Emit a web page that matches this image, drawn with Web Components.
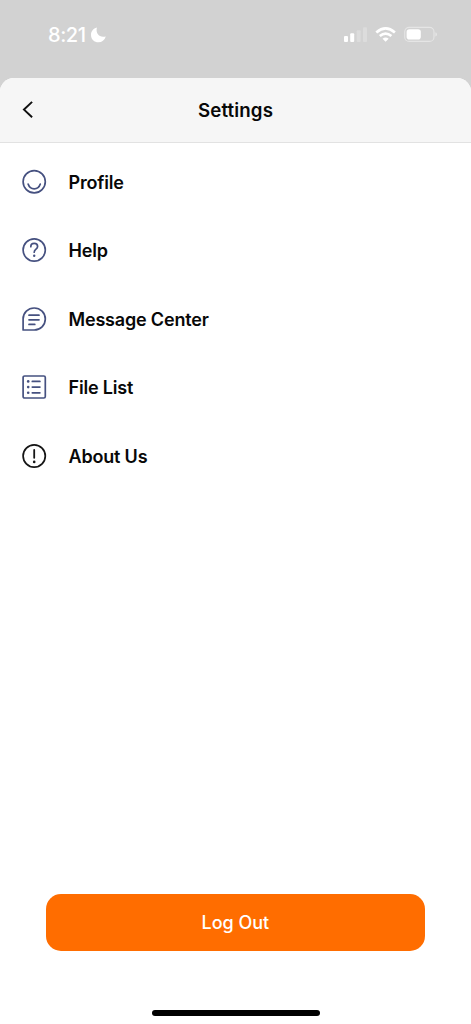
<!DOCTYPE html>
<html lang="en">
<head>
<meta charset="utf-8">
<title>Settings</title>
<style>
html,body{margin:0;height:100%;background:#d2d2d2}
body{font-family:Inter,"Liberation Sans",sans-serif;color:#080808;overflow:hidden}
</style>
</head>
<body>
<settings-screen></settings-screen>
<script>
const define = (name, html) => customElements.define(name, class extends HTMLElement {
  constructor() {
    super();
    const t = document.createElement('template');
    t.innerHTML = html;
    this.attachShadow({mode: 'open'}).append(t.content.cloneNode(true));
  }
});

define('status-bar', `
<style>
:host{display:flex;align-items:center;box-sizing:border-box;height:78px;padding:0 33px 8px 48px;color:#fff}
.time{font-size:20px;line-height:24px;font-weight:500;letter-spacing:-.45px;width:41px;white-space:nowrap}
svg{display:block;flex:none}
.moon{margin-left:1px}
.signals{margin-left:auto}
</style>
<span class="time">8:21</span>
<svg class="moon" width="18" height="18" viewBox="0 0 18 18"><path fill="#fff" d="M6.9 1.6C5.3 7.7 9.7 12.2 15.8 10.4C14.6 14.2 11.8 16.3 8.5 16.3C4.3 16.3 1 13 1 8.9C1 5.5 3.3 2.4 6.9 1.6Z"/></svg>
<svg class="signals" width="98" height="22" viewBox="340 24 98 22">
  <g fill="#fff"><rect x="344" y="36" width="4" height="6" rx="1"/><rect x="350.2" y="33.3" width="4" height="8.7" rx="1"/></g>
  <g fill="#dcdcdc"><rect x="356.7" y="30.2" width="4" height="11.8" rx="1"/><rect x="363" y="27.3" width="4" height="14.7" rx="1"/></g>
  <g fill="none" stroke="#fff" stroke-width="2.7"><path d="M376.3 32.5Q385.6 24.4 394.9 32.5"/><path d="M379.8 36Q385.6 31.2 391.4 36"/></g>
  <path fill="#fff" d="M382.5 38.7Q385.6 36.3 388.7 38.7L385.6 41.8Z"/>
  <rect x="404.7" y="27.4" width="29.3" height="14" rx="4.5" fill="none" stroke="#e5e5e5" stroke-width="1.1"/>
  <rect x="406.6" y="29.3" width="14.2" height="10.2" rx="2.8" fill="#fff"/>
  <path fill="#e5e5e5" d="M435.4 32.2Q437 32.8 437 34.4Q437 36 435.4 36.6Z"/>
</svg>`);

define('nav-header', `
<style>
:host{display:grid;grid-template-columns:48px 1fr 48px;align-items:center;box-sizing:border-box;height:64.5px;background:#f6f6f6;border-bottom:1.2px solid #e2e2e2}
svg{display:block;margin-left:20px}
h1{margin:0;padding-top:2px;text-align:center;font-size:18.7px;line-height:24px;font-weight:600;letter-spacing:.12px}
</style>
<svg width="16" height="20" viewBox="0 0 16 20"><path d="M12.1 1.9L4 9.6L12.1 17.3" fill="none" stroke="#111" stroke-width="2"/></svg>
<h1><slot></slot></h1>`);

define('menu-item', `
<style>
:host{display:flex;align-items:center;height:68.5px;padding-left:21px;gap:21.5px;font-size:18px;line-height:24px;font-weight:600;letter-spacing:-.18px;white-space:nowrap}
span{padding-top:2px}
::slotted(svg){display:block;flex:none;width:26px;height:26px;fill:none;stroke:#465180;stroke-width:1.7;stroke-linecap:round;stroke-linejoin:round}
</style>
<slot name="icon"></slot><span><slot></slot></span>`);

define('action-button', `
<style>
:host{display:block}
button{display:block;width:100%;height:57px;border:0;border-radius:15px;padding:1.5px 0 0;background:#ff6d00;color:#fff;font:500 18px/24px Inter,"Liberation Sans",sans-serif;letter-spacing:-.05px}
</style>
<button><slot></slot></button>`);

define('home-indicator', `
<style>:host{display:block;width:168px;height:6px;border-radius:3px;background:#000}</style>`);

define('settings-screen', `
<style>
:host{display:flex;flex-direction:column;height:1024px;width:471px}
main{flex:1;display:flex;flex-direction:column;background:#fff;border-radius:14px 14px 0 0;overflow:hidden}
nav{padding-top:5px;flex:1}
action-button{margin:0 46px 0 45.6px}
home-indicator{margin:59px auto 8.5px}
.solid{fill:#465180;stroke:none}
</style>
<status-bar></status-bar>
<main>
<nav-header>Settings</nav-header>
<nav>
<menu-item><svg slot="icon" viewBox="0 0 26 26"><circle cx="13.2" cy="12.8" r="11.1"/><path d="M7.1 15.1C9.2 21.5 17.2 21.5 19.3 15.1"/></svg>Profile</menu-item>
<menu-item><svg slot="icon" viewBox="0 0 26 26"><circle cx="13.2" cy="13" r="11.1"/><path d="M9.8 9.7C9.8 7.5 11.2 6.4 13.2 6.4C15.2 6.4 16.6 7.7 16.6 9.5C16.6 12.2 13.2 12 13.2 15.2"/><circle class="solid" cx="13.2" cy="18.8" r="1.2"/></svg>Help</menu-item>
<menu-item><svg slot="icon" viewBox="0 0 26 26"><path d="M2.1 24V13A11.1 11 0 1 1 13.2 24Z"/><path d="M8 9.2H18M8 13.8H18M8 18.4H13.8"/></svg>Message Center</menu-item>
<menu-item><svg slot="icon" viewBox="0 0 26 26"><rect x="2.1" y="2" width="22.2" height="22" rx="1.5"/><path d="M11.3 7.4H18.9M11.3 13.1H18.9M11.3 18.8H18.9"/><g class="solid"><circle cx="7.2" cy="7.4" r="1.3"/><circle cx="7.2" cy="13.1" r="1.3"/><circle cx="7.2" cy="18.8" r="1.3"/></g></svg>File List</menu-item>
<menu-item><svg slot="icon" viewBox="0 0 26 26" style="stroke:#151515"><circle cx="13.2" cy="13" r="11.1"/><path d="M13.2 7V14.8" stroke-width="1.8"/><circle cx="13.2" cy="18.9" r="1.3" fill="#151515" stroke="none"/></svg>About Us</menu-item>
</nav>
<action-button>Log Out</action-button>
<home-indicator></home-indicator>
</main>`);
</script>
</body>
</html>
